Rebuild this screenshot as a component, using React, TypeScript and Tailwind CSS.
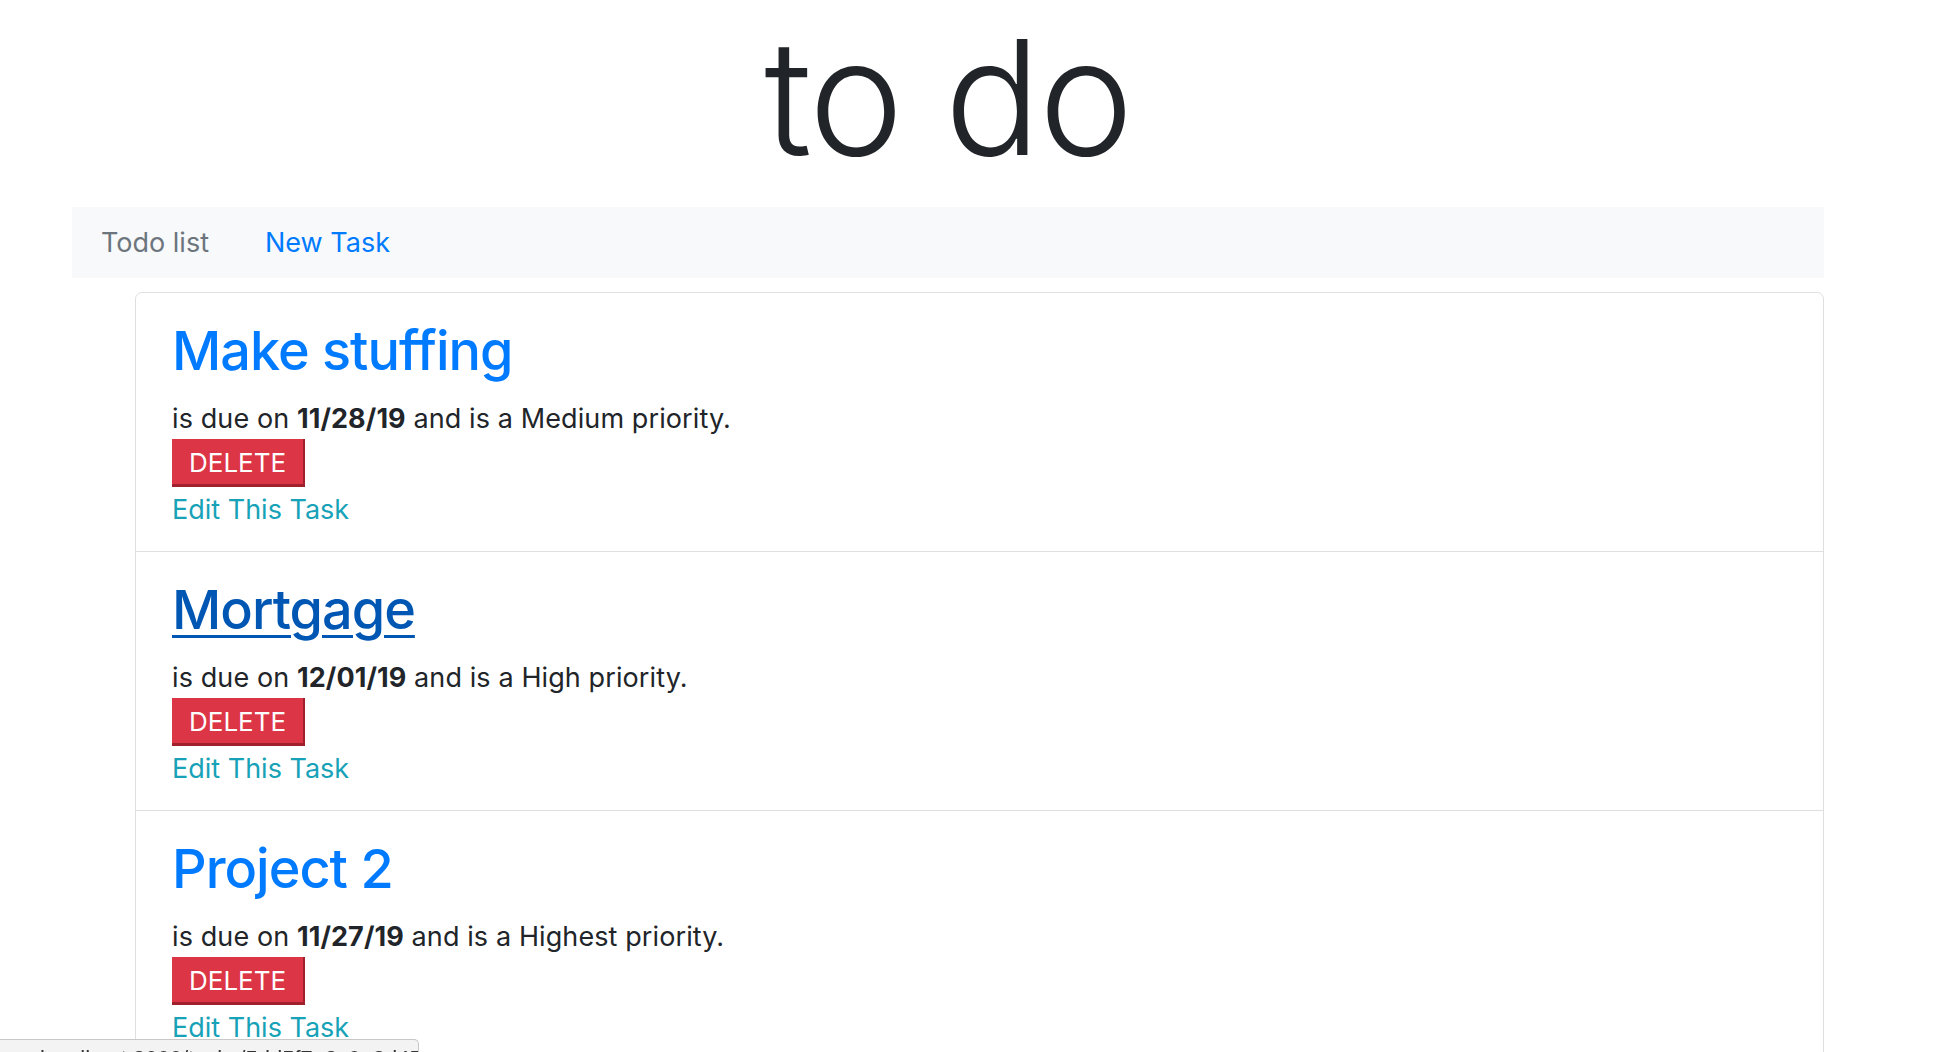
import React from 'react';

type Task = {
  id: string;
  title: string;
  due: string;
  priority: string;
  hovered?: boolean;
};

const tasks: Task[] = [
  { id: '1', title: 'Make stuffing', due: '11/28/19', priority: 'Medium' },
  { id: '2', title: 'Mortgage', due: '12/01/19', priority: 'High', hovered: true },
  { id: '3', title: 'Project 2', due: '11/27/19', priority: 'Highest' },
];

const TaskItem = ({ task, first }: { task: Task; first: boolean }) => (
  <li className={`pl-[36px] pr-6 pt-[24px] pb-[21px] ${first ? '' : 'border-t border-[#dfdfdf]'}`}>
    <h2 className="text-[54px] leading-[67px] font-medium mb-[15px] tracking-[-1px]">
      <a
        href="#"
        className={
          task.hovered
            ? 'text-[#0056b3] underline decoration-[3px] underline-offset-[6px]'
            : 'text-[#007bff]'
        }
      >
        {task.title}
      </a>
    </h2>
    <p className="text-[27px] leading-[40px] text-[#212529] tracking-[0.1px]">
      is due on <b className="font-bold">{task.due}</b> and is a {task.priority} priority.
    </p>
    <button className="block h-[48px] w-[133px] pl-[17px] pt-[2px] text-left bg-[#dc3545] text-white text-[26px] border-r-2 border-b-[3px] border-[#a1202d]">
      DELETE
    </button>
    <a href="#" className="block mt-[3px] text-[27px] leading-[40px] text-[#17a2b8]">
      Edit This Task
    </a>
  </li>
);

export default function App() {
  return (
    <div className="min-h-screen bg-white font-['Inter','Liberation_Sans',sans-serif] text-[#212529]">
      <div className="mx-[72px] w-[1752px]">
        {/* Header */}
        <h1 className="text-center text-[160px] leading-[192px] font-light text-[#212529] tracking-[-2px] pt-px mb-[14px]">
          to do
        </h1>

        {/* Nav */}
        <nav className="flex h-[71px] items-start pt-[16px] bg-[#f8f9fa]">
          <a href="#" className="pl-[29px] pr-[27px] text-[27px] leading-[40px] text-[#6c757d]">Todo list</a>
          <a href="#" className="px-[29px] text-[27px] leading-[40px] text-[#007bff]">New Task</a>
        </nav>

        {/* Task list */}
        <ul className="mt-[14px] ml-[63px] border border-[#dfdfdf] rounded-[7px]">
          {tasks.map((t, i) => (
            <TaskItem key={t.id} task={t} first={i === 0} />
          ))}
        </ul>
      </div>

      {/* Link preview bubble */}
      <div className="fixed left-0 bottom-0 h-[13px] w-[419px] overflow-hidden bg-[#f3f3f3] border-t border-r border-[#c8c8c8] rounded-tr-[5px]">
        <div className="pl-[40px] pt-[6px] text-[22px] leading-[26px] text-[#333] whitespace-nowrap font-['Liberation_Sans',sans-serif]">
          localhost:3000/tasks/5dd5f7a8c0e2d45c87500a41c0070
        </div>
      </div>
    </div>
  );
}
